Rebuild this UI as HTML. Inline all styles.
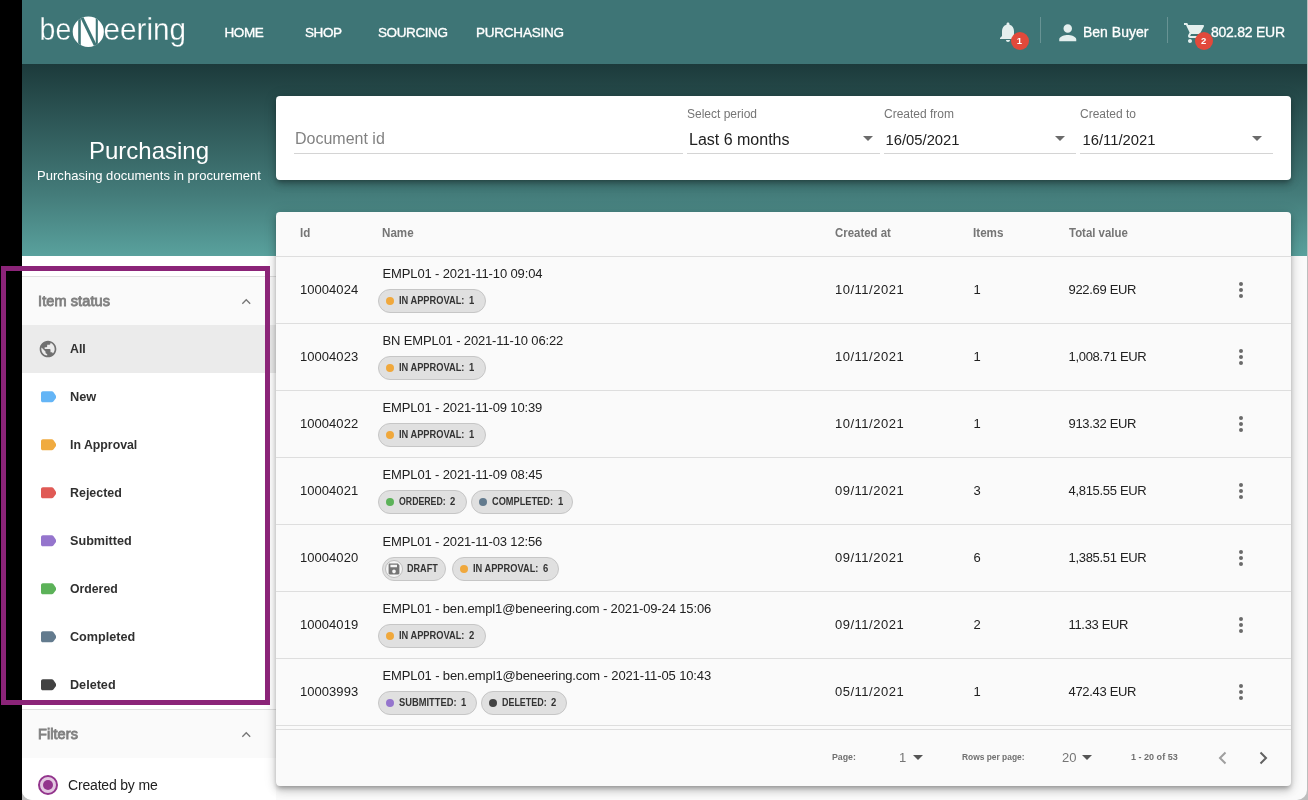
<!DOCTYPE html>
<html>
<head>
<meta charset="utf-8">
<title>Purchasing</title>
<style>
*{box-sizing:border-box;margin:0;padding:0}
html,body{width:1308px;height:800px;overflow:hidden;background:#000;font-family:"Liberation Sans",sans-serif;color:#212121}
#win{will-change:transform;position:absolute;left:22px;top:0;width:1285px;height:800px;background:#fafafa;border-radius:0 0 10px 10px;overflow:hidden}
#outer{position:absolute;left:22px;top:0;width:1286px;height:800px;background:#bdbdbd}
#hdr{position:absolute;left:0;top:0;width:1286px;height:64px;background:#3e7576;z-index:5}
#hero{position:absolute;left:0;top:64px;width:1286px;height:192px;background:linear-gradient(#1c3a3b,#447c7a 68%,#59a19d)}
.nav{position:absolute;top:24.5px;color:#fff;font-size:13.5px;font-weight:400;letter-spacing:-.4px;line-height:16px;white-space:nowrap;-webkit-text-stroke:.35px #fff}
.htxt{position:absolute;top:24px;color:#fff;font-size:14px;line-height:16px;white-space:nowrap;-webkit-text-stroke:.3px #fff}
.vsep{position:absolute;top:17px;width:1px;height:26px;background:rgba(255,255,255,.22)}
.badge{position:absolute;width:18px;height:18px;border-radius:9px;background:#e2493b;color:#fff;font-size:9.5px;line-height:18px;text-align:center;font-weight:bold}
#title{position:absolute;left:0;top:137.4px;width:254px;text-align:center;color:#fff;font-size:24px;line-height:28px;letter-spacing:0}
#sub{position:absolute;left:0;top:168px;width:254px;text-align:center;color:#fff;font-size:13px;line-height:16px;white-space:nowrap;letter-spacing:.04px}
.card{position:absolute;border-radius:4px;box-shadow:0 3px 4px -1px rgba(0,0,0,.25),0 5px 8px rgba(0,0,0,.16),0 1px 14px rgba(0,0,0,.12)}
#fcard{left:254px;top:96px;width:1015px;height:84px;background:#fff}
#tcard{left:254px;top:212px;width:1015px;height:574px;background:#fafafa}
.fl{position:absolute;top:11px;font-size:12px;line-height:14px;color:#757575;white-space:nowrap}
.fv{position:absolute;top:34.2px;font-size:16px;line-height:20px;color:#212121;white-space:nowrap}
.ul{position:absolute;top:57px;height:1px;background:#d4d4d4}
.dd{position:absolute;top:40px;width:0;height:0;border-left:5.5px solid transparent;border-right:5.5px solid transparent;border-top:5.5px solid #6b6b6b}
.th{position:absolute;top:14px;font-size:12px;line-height:14px;font-weight:bold;color:#757575;white-space:nowrap;transform-origin:0 50%}
.row{position:absolute;left:0;width:1015px;height:67px;border-top:1px solid #dedede}
.c{position:absolute;top:25px;font-size:13px;line-height:16px;color:#212121;white-space:nowrap}
.nm{position:absolute;left:106.500px;top:9px;font-size:13px;line-height:16px;color:#212121;white-space:nowrap}
.chip{position:absolute;top:32px;height:24px;border-radius:12px;background:#e0e0e0;border:1px solid #c6c6c6;font-size:10.5px;font-weight:bold;line-height:21px;color:#333;padding:0 0 0 19.600px;white-space:nowrap}
.chip b{display:inline-block;transform:scaleX(.9);transform-origin:0 50%}
.chip .lb{display:inline-block;transform-origin:0 50%}
.chip i{position:absolute;left:6.600px;top:6.800px;width:8.400px;height:8.400px;border-radius:4.200px}
.dots{position:absolute;left:963px;top:25px;width:6px;height:20px}
.dots b{display:block;width:4px;height:4px;border-radius:2px;background:#6a6a6a;margin:0 0 2px 0}
#foot{position:absolute;left:0;top:517px;width:1015px;height:57px;border-top:1px solid #dedede}
.ft{position:absolute;top:21.300px;font-size:9.5px;font-weight:bold;color:#707070;transform-origin:0 50%;line-height:12px;white-space:nowrap}
.fn{position:absolute;top:20px;font-size:13px;color:#757575;line-height:16px;white-space:nowrap}
.dd2{position:absolute;top:25px;width:0;height:0;border-left:5.5px solid transparent;border-right:5.5px solid transparent;border-top:5.5px solid #555}
#side{position:absolute;left:0;top:256px;width:254px;height:544px;background:#fff}
.sh{position:absolute;left:0;width:254px;height:49px;background:#fafafa;border-top:1px solid #e0e0e0}
.sh span{position:absolute;left:16px;top:16px;font-size:14.5px;line-height:16px;color:#7e7e7e;white-space:nowrap;-webkit-text-stroke:.85px #808080}
.chev{position:absolute;left:219px;top:20.500px;width:10.500px;height:7px}
.si{position:absolute;left:0;width:254px;height:48px}
.si span{position:absolute;left:47.600px;top:16px;font-size:13px;line-height:16px;font-weight:bold;color:#303030;white-space:nowrap;transform-origin:0 50%}
.tag{position:absolute;left:18.700px;top:18.200px}
#radio{position:absolute;left:16px;top:519px;width:20px;height:20px;border-radius:10px;border:2.5px solid #93358d;background:#e3c8e1}
#radio i{position:absolute;left:2.5px;top:2.5px;width:10px;height:10px;border-radius:5px;background:#93358d}
#cbm{position:absolute;left:46px;top:521px;font-size:14px;line-height:16px;color:#212121;white-space:nowrap}
#hl{position:absolute;left:1px;top:266px;width:269px;height:439px;border:5px solid #8b2478;z-index:20}
</style>
</head>
<body>
<div id="outer"></div>
<div id="win">
 <div id="hero"></div>
 <div id="hdr">
<svg id="logo" width="170" height="48" viewBox="0 0 170 48" style="position:absolute;left:10px;top:8px;overflow:visible">
 <g fill="#fff" stroke="#3e7576" stroke-width="0.3" font-family="Liberation Sans" font-size="32">
  <text x="7.600" y="32" textLength="31.600" lengthAdjust="spacingAndGlyphs">be</text>
  <text x="71.600" y="32" textLength="82.500" lengthAdjust="spacingAndGlyphs">eering</text>
 </g>
 <ellipse cx="56.300" cy="23.800" rx="15.600" ry="15.300" fill="#fff"/>
 <clipPath id="cc"><ellipse cx="56.300" cy="23.800" rx="15.600" ry="15.300"/></clipPath>
 <g clip-path="url(#cc)" fill="none" stroke="#3e7576">
  <path d="M47.500 42V9.500" stroke-width="2.600"/>
  <path d="M64.800 40V6" stroke-width="2.100"/>
  <path d="M49 7.600L64.500 39.900" stroke-width="3"/>
 </g>
</svg>
<div class="nav" style="left:202.5px">HOME</div><div class="nav" style="left:283px">SHOP</div><div class="nav" style="left:356px">SOURCING</div><div class="nav" style="left:454px;letter-spacing:-.22px">PURCHASING</div>
<svg style="position:absolute;left:973.5px;top:19.5px" width="24" height="24" viewBox="0 0 24 24"><path fill="#e4efee" d="M12 22c1.1 0 2-.9 2-2h-4c0 1.1.89 2 2 2zm6-6v-5c0-3.07-1.64-5.64-4.5-6.320V4c0-.83-.67-1.500-1.500-1.500s-1.500.67-1.500 1.500v.68C7.630 5.360 6 7.920 6 11v5l-2 2v1h16v-1l-2-2z"/></svg>
<div class="badge" style="left:988.5px;top:31.600px">1</div>
<div class="vsep" style="left:1018px"></div>
<svg style="position:absolute;left:1032.5px;top:20.200px" width="25.500" height="25.500" viewBox="0 0 24 24"><path fill="#e4efee" d="M12 12c2.210 0 4-1.790 4-4s-1.790-4-4-4-4 1.790-4 4 1.790 4 4 4zm0 2c-2.670 0-8 1.340-8 4v2h16v-2c0-2.660-5.330-4-8-4z"/></svg>
<div class="htxt" style="left:1061px">Ben Buyer</div>
<div class="vsep" style="left:1145px"></div>
<svg style="position:absolute;left:1160.5px;top:21.200px" width="24" height="24" viewBox="0 0 24 24"><path fill="#e4efee" d="M7 18c-1.100 0-1.990.9-1.990 2S5.900 22 7 22s2-.9 2-2-.9-2-2-2zM1 2v2h2l3.600 7.590-1.350 2.450c-.16.28-.25.61-.25.960 0 1.100.9 2 2 2h12v-2H7.420c-.14 0-.25-.11-.25-.25l.03-.12.9-1.630h7.450c.75 0 1.410-.41 1.750-1.030l3.580-6.490c.08-.14.12-.31.120-.48 0-.55-.45-1-1-1H5.210l-.94-2H1zm16 16c-1.100 0-1.990.9-1.990 2s.89 2 1.990 2 2-.9 2-2-.9-2-2-2z"/></svg>
<div class="badge" style="left:1172.700px;top:31.600px">2</div>
<div class="htxt" style="left:1189px;letter-spacing:-.25px">802.82 EUR</div>
</div>
 <div id="title">Purchasing</div>
 <div id="sub">Purchasing documents in procurement</div>
 <div id="side">
<div class="sh" style="top:20px"><span style="letter-spacing:0.107px">Item status</span><svg class="chev" viewBox="0 0 12 8"><path d="M1.500 6.500L6 2l4.500 4.500" fill="none" stroke="#757575" stroke-width="1.500"/></svg></div>
<div class="si" style="top:69px;background:#ebebeb"><svg style="position:absolute;left:16.100px;top:14px" width="20" height="20" viewBox="0 0 24 24"><path fill="#707070" d="M12 2C6.480 2 2 6.480 2 12s4.480 10 10 10 10-4.480 10-10S17.520 2 12 2zm-1 17.930c-3.950-.49-7-3.850-7-7.930 0-.62.080-1.210.21-1.790L9 15v1c0 1.100.9 2 2 2v1.930zm6.900-2.540c-.26-.81-1-1.390-1.900-1.390h-1v-3c0-.55-.45-1-1-1H8v-2h2c.55 0 1-.45 1-1V7h2c1.100 0 2-.9 2-2v-.41c2.930 1.190 5 4.060 5 7.410 0 2.080-.8 3.970-2.100 5.390z"/></svg><span style="transform:scaleX(0.9504)">All</span></div>
<div class="si" style="top:117px"><svg class="tag" width="15.800" height="11.600" viewBox="0 0 17 12"><path fill="#64b5f6" d="M2 0h9.600c.7 0 1.300.35 1.700.9L17 6l-3.700 5.100c-.4.550-1 .9-1.700.9H2c-1.100 0-2-.9-2-2V2C0 .9.900 0 2 0z"/></svg><span style="transform:scaleX(0.9838)">New</span></div>
<div class="si" style="top:165px"><svg class="tag" width="15.800" height="11.600" viewBox="0 0 17 12"><path fill="#f0ab40" d="M2 0h9.600c.7 0 1.300.35 1.700.9L17 6l-3.700 5.100c-.4.550-1 .9-1.700.9H2c-1.100 0-2-.9-2-2V2C0 .9.900 0 2 0z"/></svg><span style="transform:scaleX(0.9475)">In Approval</span></div>
<div class="si" style="top:213px"><svg class="tag" width="15.800" height="11.600" viewBox="0 0 17 12"><path fill="#e05a55" d="M2 0h9.600c.7 0 1.300.35 1.700.9L17 6l-3.700 5.100c-.4.550-1 .9-1.700.9H2c-1.100 0-2-.9-2-2V2C0 .9.900 0 2 0z"/></svg><span style="transform:scaleX(0.9557)">Rejected</span></div>
<div class="si" style="top:261px"><svg class="tag" width="15.800" height="11.600" viewBox="0 0 17 12"><path fill="#9575cd" d="M2 0h9.600c.7 0 1.300.35 1.700.9L17 6l-3.700 5.100c-.4.550-1 .9-1.700.9H2c-1.100 0-2-.9-2-2V2C0 .9.900 0 2 0z"/></svg><span style="transform:scaleX(0.9707)">Submitted</span></div>
<div class="si" style="top:309px"><svg class="tag" width="15.800" height="11.600" viewBox="0 0 17 12"><path fill="#5cb259" d="M2 0h9.600c.7 0 1.300.35 1.700.9L17 6l-3.700 5.100c-.4.550-1 .9-1.700.9H2c-1.100 0-2-.9-2-2V2C0 .9.900 0 2 0z"/></svg><span style="transform:scaleX(0.9431)">Ordered</span></div>
<div class="si" style="top:357px"><svg class="tag" width="15.800" height="11.600" viewBox="0 0 17 12"><path fill="#637b8e" d="M2 0h9.600c.7 0 1.300.35 1.700.9L17 6l-3.700 5.100c-.4.550-1 .9-1.700.9H2c-1.100 0-2-.9-2-2V2C0 .9.900 0 2 0z"/></svg><span style="transform:scaleX(0.9706)">Completed</span></div>
<div class="si" style="top:405px"><svg class="tag" width="15.800" height="11.600" viewBox="0 0 17 12"><path fill="#424242" d="M2 0h9.600c.7 0 1.300.35 1.700.9L17 6l-3.700 5.100c-.4.550-1 .9-1.700.9H2c-1.100 0-2-.9-2-2V2C0 .9.900 0 2 0z"/></svg><span style="transform:scaleX(0.9709)">Deleted</span></div>

<div class="sh" style="top:453px"><span style="letter-spacing:0.074px">Filters</span><svg class="chev" viewBox="0 0 12 8"><path d="M1.500 6.500L6 2l4.500 4.500" fill="none" stroke="#757575" stroke-width="1.500"/></svg></div>
<div id="radio"><i></i></div>
<div id="cbm" style="letter-spacing:-0.179px">Created by me</div>
</div>
 <div id="fcard" class="card">
<div class="fv" style="left:19px;color:#828282;top:33px">Document id</div>
<div class="ul" style="left:18px;width:389px"></div>
<div class="fl" style="left:411px">Select period</div>
<div class="fv" style="left:413px">Last 6 months</div>
<div class="dd" style="left:587px"></div>
<div class="ul" style="left:411px;width:193px"></div>
<div class="fl" style="left:608px">Created from</div>
<div class="fv" style="left:609.5px;font-size:14.8px;top:33.600px">16/05/2021</div>
<div class="dd" style="left:779px"></div>
<div class="ul" style="left:608px;width:192px"></div>
<div class="fl" style="left:804px">Created to</div>
<div class="fv" style="left:806.5px;font-size:14.8px;top:33.600px">16/11/2021</div>
<div class="dd" style="left:976px"></div>
<div class="ul" style="left:804px;width:193px"></div>
</div>
 <div id="tcard" class="card"><div class="th" style="left:24px;transform:scaleX(0.9652)">Id</div><div class="th" style="left:106px;transform:scaleX(0.9667)">Name</div><div class="th" style="left:559.2px;transform:scaleX(0.9525)">Created at</div><div class="th" style="left:697.2px;transform:scaleX(0.9726)">Items</div><div class="th" style="left:792.5px;transform:scaleX(0.9515)">Total value</div><div class="row" style="top:44px"><div class="c" style="left:24px;letter-spacing:0.045px">10004024</div><div class="nm" style="letter-spacing:-0.128px">EMPL01 - 2021-11-10 09:04</div><div class="chip" style="left:102.1px;width:107.6px"><i style="background:#f0a83c"></i><span class="lb" style="transform:scaleX(0.8827)">IN APPROVAL:</span><b style="margin-left:-3.79px">1</b></div><div class="c" style="left:559px;letter-spacing:0.509px">10/11/2021</div><div class="c" style="left:697.5px">1</div><div class="c" style="left:792.5px;letter-spacing:-0.313px">922.69 EUR</div><div class="dots"><b></b><b></b><b></b></div></div>
<div class="row" style="top:111px"><div class="c" style="left:24px;letter-spacing:0.045px">10004023</div><div class="nm" style="letter-spacing:-0.149px">BN EMPL01 - 2021-11-10 06:22</div><div class="chip" style="left:102.1px;width:107.6px"><i style="background:#f0a83c"></i><span class="lb" style="transform:scaleX(0.8827)">IN APPROVAL:</span><b style="margin-left:-3.79px">1</b></div><div class="c" style="left:559px;letter-spacing:0.509px">10/11/2021</div><div class="c" style="left:697.5px">1</div><div class="c" style="left:792.5px;letter-spacing:-0.314px">1,008.71 EUR</div><div class="dots"><b></b><b></b><b></b></div></div>
<div class="row" style="top:178px"><div class="c" style="left:24px;letter-spacing:0.045px">10004022</div><div class="nm" style="letter-spacing:-0.136px">EMPL01 - 2021-11-09 10:39</div><div class="chip" style="left:102.1px;width:107.6px"><i style="background:#f0a83c"></i><span class="lb" style="transform:scaleX(0.8827)">IN APPROVAL:</span><b style="margin-left:-3.79px">1</b></div><div class="c" style="left:559px;letter-spacing:0.509px">10/11/2021</div><div class="c" style="left:697.5px">1</div><div class="c" style="left:792.5px;letter-spacing:-0.313px">913.32 EUR</div><div class="dots"><b></b><b></b><b></b></div></div>
<div class="row" style="top:245px"><div class="c" style="left:24px;letter-spacing:0.045px">10004021</div><div class="nm" style="letter-spacing:-0.128px">EMPL01 - 2021-11-09 08:45</div><div class="chip" style="left:102.1px;width:88.6px"><i style="background:#5cb259"></i><span class="lb" style="transform:scaleX(0.8337)">ORDERED:</span><b style="margin-left:-4.42px">2</b></div><div class="chip" style="left:195.1px;width:101.7px"><i style="background:#637b8e"></i><span class="lb" style="transform:scaleX(0.8787)">COMPLETED:</span><b style="margin-left:-3.52px">1</b></div><div class="c" style="left:559px;letter-spacing:0.509px">09/11/2021</div><div class="c" style="left:697.5px">3</div><div class="c" style="left:792.5px;letter-spacing:-0.314px">4,815.55 EUR</div><div class="dots"><b></b><b></b><b></b></div></div>
<div class="row" style="top:312px"><div class="c" style="left:24px;letter-spacing:0.045px">10004020</div><div class="nm" style="letter-spacing:-0.136px">EMPL01 - 2021-11-03 12:56</div><div class="chip" style="left:106.1px;width:63.6px;padding-left:24.100px"><svg style="position:absolute;left:2px;top:2px" width="18" height="18" viewBox="0 0 18 18"><circle cx="9" cy="9" r="8.500" fill="#f5f5f5" stroke="#bdbdbd" stroke-width="1"/><path fill="#757575" transform="translate(9 9) scale(1.2) translate(-9 -9)" d="M12.200 4.500H5.500c-.55 0-1 .45-1 1v7c0 .55.45 1 1 1h7c.55 0 1-.45 1-1V5.800l-1.300-1.300zM9 12.500c-.83 0-1.500-.67-1.500-1.500S8.170 9.500 9 9.500s1.500.67 1.500 1.500-.67 1.500-1.500 1.500zM11.500 7.500h-5.500v-2h5.500v2z"/></svg><span class="lb" style="transform:scaleX(0.8629)">DRAFT</span></div><div class="chip" style="left:176.1px;width:107.0px"><i style="background:#f0a83c"></i><span class="lb" style="transform:scaleX(0.8827)">IN APPROVAL:</span><b style="margin-left:-3.79px">6</b></div><div class="c" style="left:559px;letter-spacing:0.509px">09/11/2021</div><div class="c" style="left:697.5px">6</div><div class="c" style="left:792.5px;letter-spacing:-0.314px">1,385.51 EUR</div><div class="dots"><b></b><b></b><b></b></div></div>
<div class="row" style="top:379px"><div class="c" style="left:24px;letter-spacing:0.045px">10004019</div><div class="nm" style="letter-spacing:-0.136px">EMPL01 - ben.empl1@beneering.com - 2021-09-24 15:06</div><div class="chip" style="left:102.1px;width:107.6px"><i style="background:#f0a83c"></i><span class="lb" style="transform:scaleX(0.8827)">IN APPROVAL:</span><b style="margin-left:-3.79px">2</b></div><div class="c" style="left:559px;letter-spacing:0.509px">09/11/2021</div><div class="c" style="left:697.5px">2</div><div class="c" style="left:792.5px;letter-spacing:-0.327px">11.33 EUR</div><div class="dots"><b></b><b></b><b></b></div></div>
<div class="row" style="top:446px"><div class="c" style="left:24px;letter-spacing:0.045px">10003993</div><div class="nm" style="letter-spacing:-0.117px">EMPL01 - ben.empl1@beneering.com - 2021-11-05 10:43</div><div class="chip" style="left:102.1px;width:98.6px"><i style="background:#9575cd"></i><span class="lb" style="transform:scaleX(0.8880)">SUBMITTED:</span><b style="margin-left:-2.35px">1</b></div><div class="chip" style="left:205.1px;width:85.5px"><i style="background:#424242"></i><span class="lb" style="transform:scaleX(0.8495)">DELETED:</span><b style="margin-left:-3.00px">2</b></div><div class="c" style="left:559px;letter-spacing:0.509px">05/11/2021</div><div class="c" style="left:697.5px">1</div><div class="c" style="left:792.5px;letter-spacing:-0.313px">472.43 EUR</div><div class="dots"><b></b><b></b><b></b></div></div>

<div class="row" style="top:513px;height:4px"></div>
<div id="foot">
 <div class="ft" style="left:556px;transform:scaleX(0.9237)">Page:</div>
 <div class="fn" style="left:623px">1</div>
 <div class="dd2" style="left:637px"></div>
 <div class="ft" style="left:686px;transform:scaleX(0.8834)">Rows per page:</div>
 <div class="fn" style="left:786px">20</div>
 <div class="dd2" style="left:806px"></div>
 <div class="ft" style="left:855px;transform:scaleX(0.9509)">1 - 20 of 53</div>
 <svg style="position:absolute;left:934px;top:16px" width="24" height="24" viewBox="0 0 24 24"><path fill="none" stroke="#9e9e9e" stroke-width="2" d="M15.500 6.500l-5.500 5.500 5.500 5.500"/></svg>
 <svg style="position:absolute;left:975px;top:16px" width="24" height="24" viewBox="0 0 24 24"><path fill="none" stroke="#616161" stroke-width="2" d="M9.500 6.500l5.500 5.500-5.500 5.500"/></svg>
</div>
</div>
</div>
<div id="hl"></div>
</body>
</html>
